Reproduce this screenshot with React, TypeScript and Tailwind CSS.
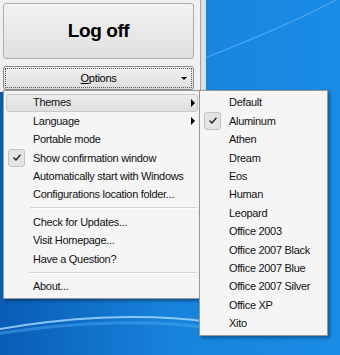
import { FC } from "react";

type Item = { label?: string; sep?: boolean; sub?: boolean; checked?: boolean; hot?: boolean };

const mainItems: Item[] = [
  { label: "Themes", sub: true, hot: true },
  { label: "Language", sub: true },
  { label: "Portable mode" },
  { label: "Show confirmation window", checked: true },
  { label: "Automatically start with Windows" },
  { label: "Configurations location folder..." },
  { sep: true },
  { label: "Check for Updates..." },
  { label: "Visit Homepage..." },
  { label: "Have a Question?" },
  { sep: true },
  { label: "About..." },
];

const themes: Item[] = [
  { label: "Default" },
  { label: "Aluminum", checked: true },
  { label: "Athen" },
  { label: "Dream" },
  { label: "Eos" },
  { label: "Human" },
  { label: "Leopard" },
  { label: "Office 2003" },
  { label: "Office 2007 Black" },
  { label: "Office 2007 Blue" },
  { label: "Office 2007 Silver" },
  { label: "Office XP" },
  { label: "Xito" },
];

const Check: FC = () => (
  <div className="absolute left-[3px] top-0 w-[17px] h-[18px] rounded-[3px] border border-[#c2c2c2] bg-[#e4e4e4] flex items-center justify-center">
    <svg width="8" height="7" viewBox="0 0 8 7">
      <path d="M0.5 3.5 L3 6 L7.5 0.8" stroke="#222" strokeWidth="1.4" fill="none" />
    </svg>
  </div>
);

const MenuRow: FC<{ item: Item }> = ({ item }) => {
  if (item.sep) {
    return (
      <div className="h-[9px] flex flex-col justify-center pl-[25px] pr-[2px]">
        <div className="h-px bg-[#d4d4d4]" />
        <div className="h-px bg-white" />
      </div>
    );
  }
  return (
    <div className="relative h-[18.4px] flex items-center">
      {item.hot && (
        <div className="absolute left-[1px] right-[1px] top-0 bottom-0 rounded-[3px] border border-[#c9c9c9] bg-gradient-to-b from-[#ececec] to-[#dedede]" />
      )}
      {item.checked && <Check />}
      <span className="relative pl-[28px] text-[#111] tracking-[-0.3px]">{item.label}</span>
      {item.sub && (
        <div className="absolute right-[4px] top-[5px] w-0 h-0 border-y-[4px] border-y-transparent border-l-[4px] border-l-black" />
      )}
    </div>
  );
};

const App: FC = () => {
  return (
    <div
      className="relative w-[340px] h-[355px] overflow-hidden bg-gradient-to-r from-[#0a5cb4] via-[#1783dc] to-[#1a8ce6] text-[11px]"
      style={{ fontFamily: '"Liberation Sans", Arial, sans-serif' }}
    >
      {/* wallpaper streaks */}
      <svg className="absolute inset-0" width="340" height="355" viewBox="0 0 340 355">
        <path d="M205 58 C 250 40, 300 20, 345 -5" stroke="#5fb3f2" strokeWidth="1.2" fill="none" opacity="0.7" />
        <path d="M-5 330 C 60 318, 140 312, 210 322" stroke="#a9dcff" strokeWidth="2" fill="none" opacity="0.8" />
        <path d="M-5 334 C 60 324, 140 318, 210 328" stroke="#4aa8f0" strokeWidth="3" fill="none" opacity="0.5" />
      </svg>

      {/* app window */}
      <div className="relative flex w-[206px] h-[92px]">
        <div className="w-[200px] bg-[#f0f0f0] flex flex-col gap-[7px] pl-[3px] pt-[3px]">
          <div className="w-[191px] h-[56px] rounded-[3px] border border-[#acacac] bg-gradient-to-b from-[#f2f2f2] to-[#e0e0e0] flex items-center justify-center">
            <span className="font-bold text-[19px] tracking-[-0.4px] text-black">Log off</span>
          </div>
          <div className="w-[191px] h-[24px] rounded-[3px] border border-[#8a8a8a] bg-gradient-to-b from-[#f2f2f2] to-[#dddddd] p-[1px]">
            <div className="relative h-full border border-dotted border-[#555] flex items-center justify-center">
              <span className="text-black tracking-[-0.3px]">
                <span className="underline">O</span>ptions
              </span>
              <div className="absolute right-[4px] top-[8px] w-0 h-0 border-x-[3px] border-x-transparent border-t-[3px] border-t-black" />
            </div>
          </div>
        </div>
        <div className="w-px bg-[#9aa4ae]" />
        <div className="w-[5px] bg-[#d6e0ea]" />
      </div>

      {/* main menu */}
      <div className="absolute left-[3px] top-[90px] w-[198px] border border-[#979797] bg-[#f5f5f5] py-[2.5px] px-[1px] shadow-[2px_2px_3px_rgba(0,0,0,0.35)]">
        {mainItems.map((it, i) => (
          <MenuRow key={i} item={it} />
        ))}
      </div>

      {/* themes submenu */}
      <div className="absolute left-[199px] top-[90px] w-[129px] border border-[#979797] bg-[#f5f5f5] py-[2.5px] px-[1px] shadow-[2px_2px_3px_rgba(0,0,0,0.35)]">
        {themes.map((it, i) => (
          <MenuRow key={i} item={it} />
        ))}
      </div>
    </div>
  );
};

export default App;
